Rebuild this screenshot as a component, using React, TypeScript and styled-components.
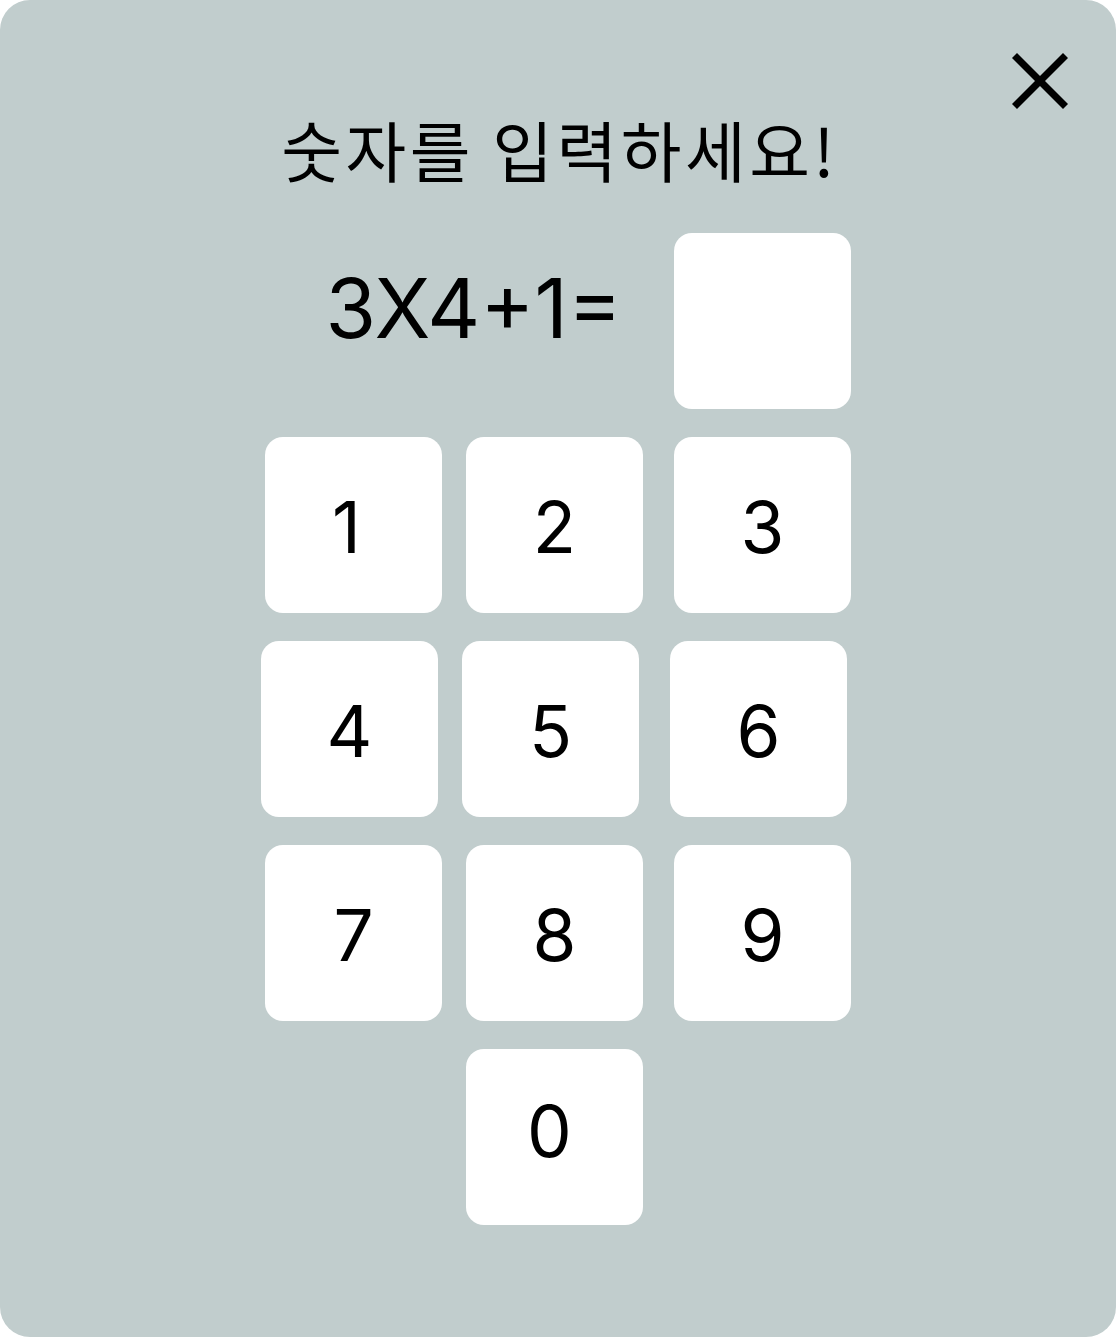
import React from "react";
import styled, { createGlobalStyle } from "styled-components";

const GlobalStyle = createGlobalStyle`
  html, body { margin: 0; padding: 0; background: #ffffff; }
  body { font-family: "Inter", "Noto Sans CJK KR", sans-serif; }
  * { box-sizing: border-box; }
`;

const Card = styled.div`
  position: relative;
  width: 1116px;
  height: 1337px;
  background: #c1cdcd;
  border-radius: 30px;
  display: flex;
  flex-direction: column;
  align-items: center;
`;

const CloseButton = styled.button`
  position: absolute;
  top: 53px;
  left: 1012px;
  width: 56px;
  height: 56px;
  padding: 0;
  border: none;
  background: transparent;
  cursor: pointer;
  display: flex;
`;

const Title = styled.h1`
  margin: 104px 0 0;
  padding-left: 3.5px;
  font-family: "Noto Sans CJK KR", sans-serif;
  font-weight: 400;
  font-size: 66px;
  line-height: 88px;
  letter-spacing: 3.5px;
  color: #000;
`;

const Content = styled.div`
  width: 586px;
  display: flex;
  flex-direction: column;
  gap: 28px;
`;

const EquationRow = styled.div`
  display: flex;
  align-items: center;
  justify-content: flex-end;
  margin-top: 41px;
  gap: 52px;
`;

const Equation = styled.span`
  font-family: "Inter", sans-serif;
  font-size: 82px;
  font-weight: 400;
  color: #000;
  line-height: 1;
  margin-top: -24px;
`;

const AnswerBox = styled.div`
  width: 177px;
  height: 176px;
  background: #ffffff;
  border-radius: 18px;
`;

const Row = styled.div<{ $shift?: number }>`
  display: grid;
  grid-template-columns: 177px 177px 177px;
  column-gap: 24px;
  margin-left: ${(p) => p.$shift ?? 0}px;
`;

const Key = styled.button<{ $col?: number; $dx?: number; $dy?: number }>`
  grid-column: ${(p) => p.$col ?? "auto"};
  width: 177px;
  height: 176px;
  border: none;
  padding: 0;
  background: #ffffff;
  border-radius: 18px;
  font-family: "Inter", sans-serif;
  font-size: 71px;
  font-weight: 400;
  color: #000;
  display: flex;
  align-items: center;
  justify-content: center;
  cursor: pointer;
  &:nth-child(3) {
    margin-left: 7px;
  }
`;

const KeyLabel = styled.span<{ $dx?: number; $dy?: number }>`
  display: block;
  line-height: 1;
  transform: translate(${(p) => p.$dx ?? 0}px, ${(p) => (p.$dy ?? 0) + 2}px);
`;

type KeyDef = { label: string; dx?: number; dy?: number };

const rows: { keys: KeyDef[]; shift: number }[] = [
  { keys: [{ label: "1", dx: -7 }, { label: "2" }, { label: "3" }], shift: 0 },
  { keys: [{ label: "4" }, { label: "5" }, { label: "6" }], shift: -4 },
  { keys: [{ label: "7" }, { label: "8" }, { label: "9" }], shift: 0 },
];

export default function App() {
  return (
    <>
      <GlobalStyle />
      <Card>
        <CloseButton aria-label="닫기">
          <svg width="56" height="56" viewBox="0 0 56 56">
            <line x1="2.5" y1="2.5" x2="53.5" y2="53.5" stroke="#000" strokeWidth="7" />
            <line x1="53.5" y1="2.5" x2="2.5" y2="53.5" stroke="#000" strokeWidth="7" />
          </svg>
        </CloseButton>
        <Title>숫자를 입력하세요!</Title>
        <Content>
          <EquationRow>
            <Equation>3X4+1=</Equation>
            <AnswerBox />
          </EquationRow>
          {rows.map((r) => (
            <Row key={r.keys.map((k) => k.label).join("")} $shift={r.shift}>
              {r.keys.map((k) => (
                <Key key={k.label}>
                  <KeyLabel $dx={k.dx} $dy={k.dy}>{k.label}</KeyLabel>
                </Key>
              ))}
            </Row>
          ))}
          <Row>
            <Key $col={2}>
              <KeyLabel $dx={-5} $dy={-8}>0</KeyLabel>
            </Key>
          </Row>
        </Content>
      </Card>
    </>
  );
}
